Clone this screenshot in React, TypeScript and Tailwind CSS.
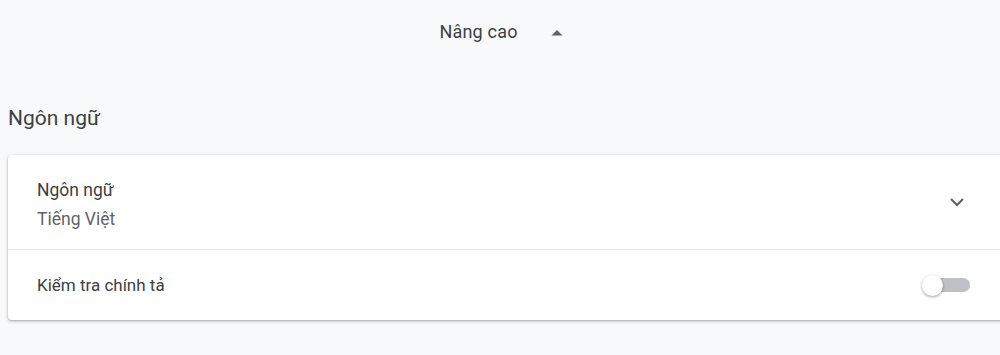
export default function App() {
  return (
    <div className="w-[1000px] h-[355px] overflow-hidden bg-[#f8f9fa] font-['Roboto',sans-serif] text-[#3c4043]">
      {/* Advanced toggle */}
      <div className="h-[64px] flex items-center justify-center gap-[33px] pl-[2px]">
        <span className="text-[18px] leading-[24px] tracking-[0.2px] text-[#3c4043]">Nâng cao</span>
        <svg width="12" height="7" viewBox="0 0 12 7">
          <path d="M0.5 6.5 L6 1 L11.5 6.5 Z" fill="#5f6368" />
        </svg>
      </div>

      {/* Section title */}
      <h2 className="mt-[40px] pl-[8px] text-[21px] leading-[28px] text-[#3c4043]">Ngôn ngữ</h2>

      {/* Card */}
      <div className="mt-[23px] ml-[8px] w-[1010px] bg-white rounded-[4px] shadow-[0_1px_2px_rgba(60,64,67,0.3),0_1px_3px_1px_rgba(60,64,67,0.15)]">
        <div className="h-[94px] flex items-center pl-[29px] pr-[53px]">
          <div className="flex-1 pt-[5px]">
            <div className="text-[17.5px] leading-[24px] text-[#3c4043]">Ngôn ngữ</div>
            <div className="mt-[5px] text-[17.5px] leading-[24px] text-[#5f6368]">Tiếng Việt</div>
          </div>
          <svg width="16" height="10" viewBox="0 0 16 10" fill="none">
            <path d="M2 2 L8 8 L14 2" stroke="#5f6368" strokeWidth="2.2" />
          </svg>
        </div>
        <div className="h-[71px] border-t border-[#e8eaed] flex items-center pl-[29px] pr-[48px]">
          <div className="flex-1 text-[17px] leading-[24px] text-[#3c4043]">Kiểm tra chính tả</div>
          <div className="relative w-[48px] h-[20px] flex items-center">
            <div className="absolute left-[8px] right-0 h-[14px] rounded-full bg-[#bdc1c6]" />
            <div className="absolute left-0 w-[21px] h-[21px] rounded-full bg-white shadow-[0_1px_3px_rgba(0,0,0,0.4)]" />
          </div>
        </div>
      </div>
    </div>
  )
}
